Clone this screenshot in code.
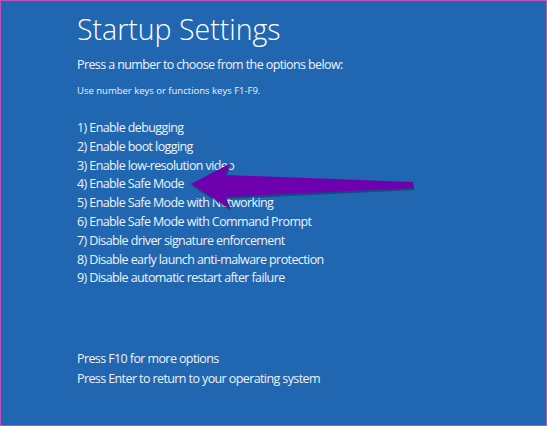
const options = [
  "1) Enable debugging",
  "2) Enable boot logging",
  "3) Enable low-resolution video",
  "4) Enable Safe Mode",
  "5) Enable Safe Mode with Networking",
  "6) Enable Safe Mode with Command Prompt",
  "7) Disable driver signature enforcement",
  "8) Disable early launch anti-malware protection",
  "9) Disable automatic restart after failure",
];

const Arrow = () => (
  <svg
    className="absolute left-0 top-0 pointer-events-none"
    width="547"
    height="426"
    viewBox="0 0 547 426"
  >
    <polygon
      points="191,185 230,164 225,177 413,184 413,189 225,198 230,210"
      fill="#0e2f5c"
      opacity="0.55"
    />
    <polygon
      points="190,183 230,162 224,174 412,181 412,187 224,196 230,208"
      fill="#6f00ae"
    />
  </svg>
);

export default function App() {
  return (
    <div
      className="relative w-[547px] h-[426px] bg-[#2166b1] border border-[#c04fc0] overflow-hidden text-[#eef3fa]"
      style={{ fontFamily: '"Open Sans", "Noto Sans", sans-serif' }}
    >
      <div className="pl-[76px] pt-[6px]">
        <h1 className="text-[28.5px] font-light text-white leading-[44px]">
          Startup Settings
        </h1>
        <p className="mt-[5px] text-[12.5px] leading-[18px] tracking-[-0.6px]">
          Press a number to choose from the options below:
        </p>
        <p className="mt-[10px] text-[9.5px] leading-[14px]">
          Use number keys or functions keys F1-F9.
        </p>
        <ul className="mt-[21px] text-[12.5px] tracking-[-0.6px]">
          {options.map((o) => (
            <li key={o} className="leading-[18.8px]">
              {o}
            </li>
          ))}
        </ul>
        <div className="mt-[61px] text-[12.5px] tracking-[-0.6px]">
          <p className="leading-[20px]">Press F10 for more options</p>
          <p className="leading-[20px]">
            Press Enter to return to your operating system
          </p>
        </div>
      </div>
      <Arrow />
    </div>
  );
}
